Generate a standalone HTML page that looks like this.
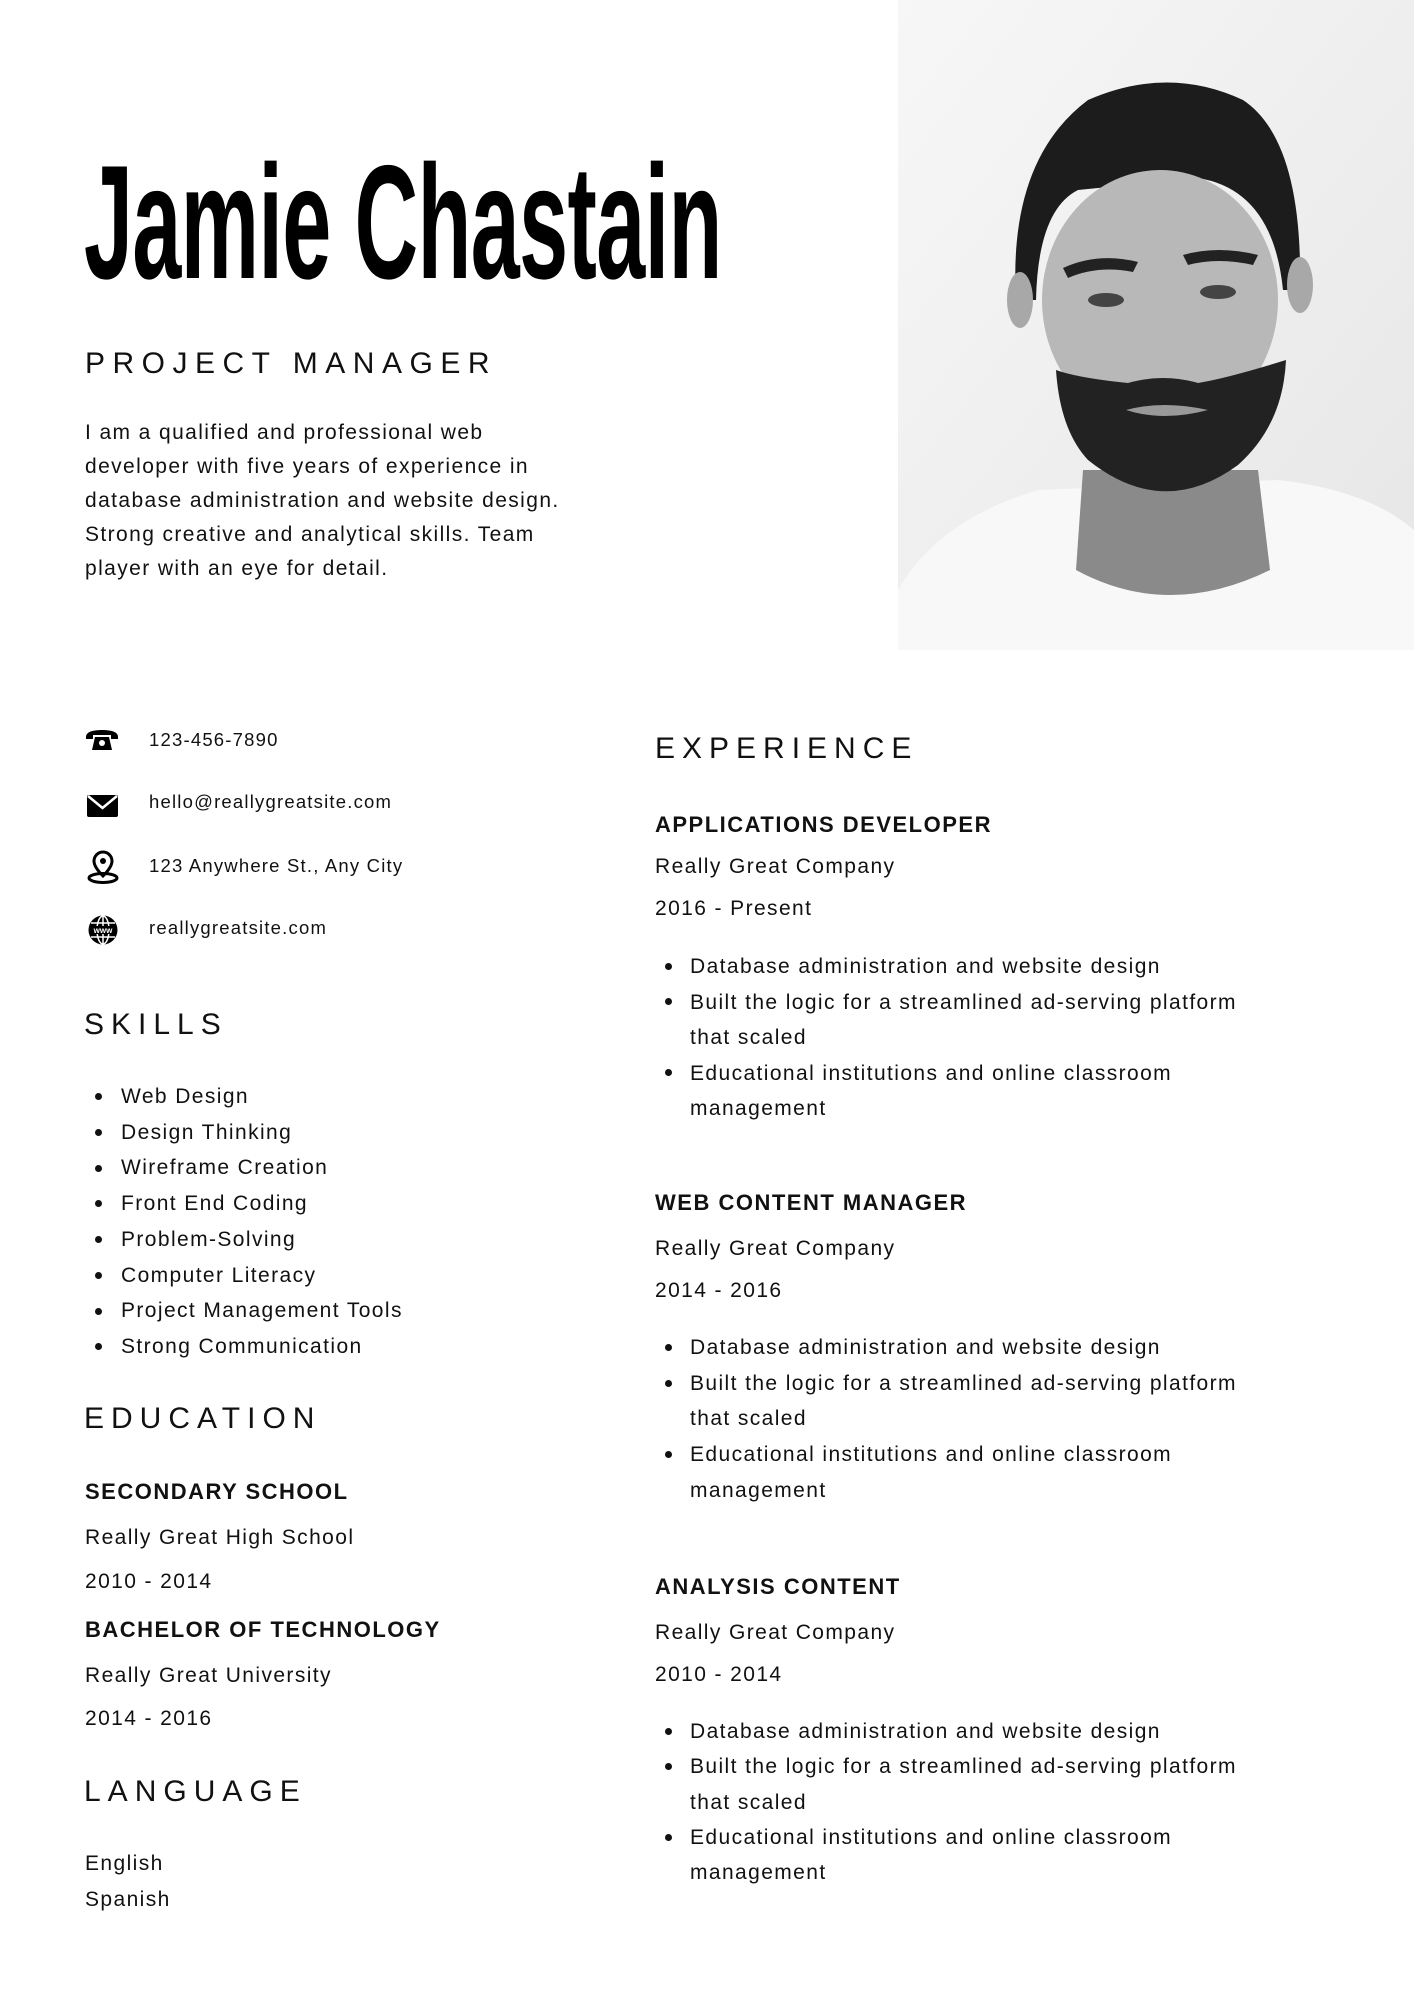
<!DOCTYPE html>
<html><head><meta charset="utf-8"><style>
*{margin:0;padding:0;box-sizing:border-box}
body{width:1414px;height:2000px;background:#fff;position:relative;overflow:hidden;font-family:"Liberation Sans",sans-serif;color:#111}
.a{position:absolute;white-space:nowrap}
.h{font-size:30px;letter-spacing:7px;font-weight:normal;line-height:36px}
.t{font-size:21px;line-height:34px;letter-spacing:1.4px}
.b{font-size:22px;font-weight:bold;line-height:30px;letter-spacing:1.5px}
.c{font-size:18.5px;line-height:26px;letter-spacing:1.2px}
.dot{position:absolute;width:7px;height:7px;border-radius:50%;background:#111}
</style></head><body>
<svg class="a" style="left:898px;top:0" width="516" height="650" viewBox="0 0 516 650">
<defs><linearGradient id="bg" x1="0" y1="0" x2="1" y2="1"><stop offset="0" stop-color="#f7f7f7"/><stop offset="1" stop-color="#e6e6e6"/></linearGradient></defs>
<rect width="516" height="650" fill="url(#bg)"/>
<path d="M0 650 L0 590 Q40 520 140 490 L380 480 Q470 490 516 530 L516 650Z" fill="#f8f8f8"/>
<path d="M185 470 L360 470 L372 570 Q270 620 178 570Z" fill="#8a8a8a"/>
<path d="M118 300 Q110 160 190 100 Q270 65 345 100 Q405 140 402 290 L385 290 Q375 190 300 178 L180 190 Q140 210 138 300Z" fill="#1c1c1c"/>
<ellipse cx="262" cy="300" rx="118" ry="130" fill="#b8b8b8"/>
<ellipse cx="122" cy="300" rx="13" ry="28" fill="#a8a8a8"/><ellipse cx="402" cy="285" rx="13" ry="28" fill="#a8a8a8"/>
<path d="M165 268 Q200 252 240 262 L235 272 Q200 265 170 278Z M285 255 Q320 245 360 255 L355 265 Q320 257 290 265Z" fill="#222"/>
<ellipse cx="208" cy="300" rx="18" ry="7" fill="#444"/><ellipse cx="320" cy="292" rx="18" ry="7" fill="#444"/>
<path d="M158 370 Q162 430 190 460 Q265 520 340 465 Q385 425 388 360 Q330 378 300 383 Q265 373 230 383 Q180 378 158 370Z" fill="#222"/>
<path d="M228 410 Q265 400 310 410 Q265 422 228 410Z" fill="#999"/>
</svg>
<div class="a" style="left:84px;top:142px;font-family:'Liberation Sans Narrow','Liberation Sans',sans-serif;font-weight:bold;font-size:162px;line-height:162px;letter-spacing:-1px;transform:scaleX(0.543);transform-origin:left top;color:#000">Jamie Chastain</div>
<div class="a h" style="left:85px;top:346px;letter-spacing:7.5px">PROJECT MANAGER</div>
<div class="a t" style="left:85px;top:416px">I am a qualified and professional web<br>developer with five years of experience in<br>database administration and website design.<br>Strong creative and analytical skills. Team<br>player with an eye for detail.</div>

<svg class="a" style="left:85px;top:728px" width="34" height="24" viewBox="0 0 34 24"><path d="M1 9 Q1 2 17 2 Q33 2 33 9 L33 11 L26 11 L26 7 L8 7 L8 11 L1 11Z" fill="#000"/><path d="M10 9 L24 9 L27 22 L7 22Z" fill="#000"/><circle cx="17" cy="15" r="3" fill="#fff"/></svg>
<svg class="a" style="left:87px;top:795px" width="31" height="22" viewBox="0 0 31 22"><rect width="31" height="22" rx="2" fill="#000"/><path d="M1 1 L15.5 13 L30 1" stroke="#fff" stroke-width="2.5" fill="none"/></svg>
<svg class="a" style="left:87px;top:850px" width="32" height="34" viewBox="0 0 32 34"><path d="M16 2 A9 9 0 0 1 25 11 Q25 17 16 26 Q7 17 7 11 A9 9 0 0 1 16 2Z" fill="none" stroke="#000" stroke-width="3"/><circle cx="16" cy="11" r="3" fill="#000"/><ellipse cx="16" cy="28" rx="14" ry="4.5" fill="none" stroke="#000" stroke-width="3"/></svg>
<svg class="a" style="left:87px;top:914px" width="32" height="32" viewBox="0 0 32 32"><circle cx="16" cy="16" r="14.5" fill="#000"/><g stroke="#fff" stroke-width="1.5" fill="none"><ellipse cx="16" cy="16" rx="6" ry="14"/><line x1="16" y1="2" x2="16" y2="30"/><line x1="4" y1="9" x2="28" y2="9"/><line x1="4" y1="23" x2="28" y2="23"/></g><rect x="3" y="12" width="26" height="8" fill="#000"/><text x="16" y="19" font-size="8" font-weight="bold" fill="#fff" text-anchor="middle" font-family="Liberation Sans">www</text></svg>
<div class="a c" style="left:149px;top:727px">123-456-7890</div>
<div class="a c" style="left:149px;top:789px">hello@reallygreatsite.com</div>
<div class="a c" style="left:149px;top:853px">123 Anywhere St., Any City</div>
<div class="a c" style="left:149px;top:915px">reallygreatsite.com</div>

<div class="a h" style="left:84px;top:1007px">SKILLS</div>
<div class="a t" style="left:121px;top:1079px;line-height:35.7px">Web Design<br>Design Thinking<br>Wireframe Creation<br>Front End Coding<br>Problem-Solving<br>Computer Literacy<br>Project Management Tools<br>Strong Communication</div>
<div class="dot" style="left:95px;top:1093px"></div><div class="dot" style="left:95px;top:1129px"></div><div class="dot" style="left:95px;top:1165px"></div><div class="dot" style="left:95px;top:1200px"></div><div class="dot" style="left:95px;top:1236px"></div><div class="dot" style="left:95px;top:1272px"></div><div class="dot" style="left:95px;top:1308px"></div><div class="dot" style="left:95px;top:1343px"></div>

<div class="a h" style="left:84px;top:1401px">EDUCATION</div>
<div class="a b" style="left:85px;top:1477px">SECONDARY SCHOOL</div>
<div class="a t" style="left:85px;top:1521px">Really Great High School</div>
<div class="a t" style="left:85px;top:1565px">2010 - 2014</div>
<div class="a b" style="left:85px;top:1615px">BACHELOR OF TECHNOLOGY</div>
<div class="a t" style="left:85px;top:1659px">Really Great University</div>
<div class="a t" style="left:85px;top:1702px">2014 - 2016</div>
<div class="a h" style="left:84px;top:1774px">LANGUAGE</div>
<div class="a t" style="left:85px;top:1846px;line-height:36px">English<br>Spanish</div>

<div class="a h" style="left:655px;top:731px">EXPERIENCE</div>

<div class="a b" style="left:655px;top:810px">APPLICATIONS DEVELOPER</div>
<div class="a t" style="left:655px;top:850px">Really Great Company</div>
<div class="a t" style="left:655px;top:892px">2016 - Present</div>
<div class="a t" style="left:690px;top:949px;line-height:35.5px">Database administration and website design<br>Built the logic for a streamlined ad-serving platform<br>that scaled<br>Educational institutions and online classroom<br>management</div>
<div class="dot" style="left:665px;top:963px"></div><div class="dot" style="left:665px;top:998px"></div><div class="dot" style="left:665px;top:1069px"></div>

<div class="a b" style="left:655px;top:1188px">WEB CONTENT MANAGER</div>
<div class="a t" style="left:655px;top:1232px">Really Great Company</div>
<div class="a t" style="left:655px;top:1274px">2014 - 2016</div>
<div class="a t" style="left:690px;top:1330px;line-height:35.7px">Database administration and website design<br>Built the logic for a streamlined ad-serving platform<br>that scaled<br>Educational institutions and online classroom<br>management</div>
<div class="dot" style="left:665px;top:1344px"></div><div class="dot" style="left:665px;top:1380px"></div><div class="dot" style="left:665px;top:1451px"></div>

<div class="a b" style="left:655px;top:1572px">ANALYSIS CONTENT</div>
<div class="a t" style="left:655px;top:1616px">Really Great Company</div>
<div class="a t" style="left:655px;top:1658px">2010 - 2014</div>
<div class="a t" style="left:690px;top:1714px;line-height:35.3px">Database administration and website design<br>Built the logic for a streamlined ad-serving platform<br>that scaled<br>Educational institutions and online classroom<br>management</div>
<div class="dot" style="left:665px;top:1728px"></div><div class="dot" style="left:665px;top:1763px"></div><div class="dot" style="left:665px;top:1834px"></div>
</body></html>
